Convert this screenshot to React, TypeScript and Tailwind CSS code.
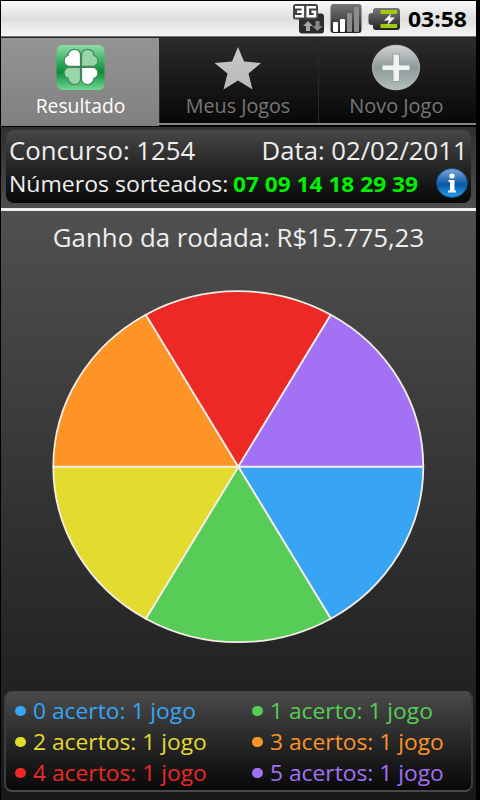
import React from 'react';
import clsx from 'clsx';

const SLICES = [
  { label: '0 acerto: 1 jogo', color: '#38a5f4' },
  { label: '1 acerto: 1 jogo', color: '#57cd57' },
  { label: '2 acertos: 1 jogo', color: '#e3db2e' },
  { label: '3 acertos: 1 jogo', color: '#fe9326' },
  { label: '4 acertos: 1 jogo', color: '#ed2926' },
  { label: '5 acertos: 1 jogo', color: '#a271f4' },
];

const SignalIcons = () => (
  <svg width="110" height="35" viewBox="292 1 110 35" className="shrink-0">
    <defs>
      <linearGradient id="dark" x1="0" y1="0" x2="0" y2="1">
        <stop offset="0" stopColor="#777" />
        <stop offset="1" stopColor="#222" />
      </linearGradient>
    </defs>
    {/* 3G */}
    <rect x="299" y="13.5" width="25" height="20" rx="3" fill="#2b2b2b" />
    <rect x="293" y="4" width="25" height="15.5" rx="2.5" fill="#444" />
    <path
      d="M295 7.300h7.800v8.900H295M297 11.700h6M316 7.300h-8.300v8.900h7.300v-4.500h-3.500"
      fill="none"
      stroke="#fff"
      strokeWidth="2.600"
    />
    <path d="M308 21l5 5h-3v5h-4v-5h-3z" fill="#aaa" />
    <path d="M317.500 31l5-5h-3v-5h-4v5h-3z" fill="#888" />
    {/* signal */}
    <rect x="330.500" y="4" width="31" height="29" rx="3" fill="url(#dark)" />
    <rect x="333" y="22" width="5" height="10" rx="1" fill="#fff" />
    <rect x="340" y="19" width="5" height="13" rx="1" fill="#fff" />
    <rect x="347" y="13" width="5" height="19" rx="1" fill="#8c8c8c" />
    <rect x="354" y="7" width="5" height="25" rx="1" fill="#8c8c8c" />
    {/* battery */}
    <path
      d="M376 8h21q3 0 3 3v16q0 3-3 3h-21q-3 0-3-3v-2h-1q-3.500 0-3.500-3v-6q0-3 3.500-3h1V11q0-3 3-3z"
      fill="url(#dark)"
    />
    <path d="M380.500 10h16.500v4h-16.500zM380.500 24h16.500v4h-16.500z" fill="#9ccb10" />
    <path d="M391 13.500l-7 7h5l-2 5 8-8h-5z" fill="#fff" />
  </svg>
);

const CloverIcon = () => (
  <svg width="50" height="48" viewBox="-1 0 50 48">
    <defs>
      <linearGradient id="clover" x1="0" y1="0" x2="0" y2="1">
        <stop offset="0" stopColor="#8fdcaa" />
        <stop offset="0.400" stopColor="#2fac5a" />
        <stop offset="0.600" stopColor="#0b8c3a" />
        <stop offset="1" stopColor="#72d894" />
      </linearGradient>
    </defs>
    <rect x="0.500" y="1" width="48" height="45" rx="6" fill="url(#clover)" />
    <g stroke="#40865a" strokeWidth="1.200">
      <path d="M24.500 22.300H12.500a5.600 5.600 0 0 1-.500-10.800 6.300 6.300 0 0 1 6.500-6.200q6 0 6 6.500z" fill="#fff" />
      <path d="M25.500 22.300h12a5.600 5.600 0 0 0 .500-10.800 6.300 6.300 0 0 0-6.500-6.200q-6 0-6 6.500z" fill="#98d6aa" />
      <path d="M24.500 23.500H12.500a5.600 5.600 0 0 0-.500 10.800 6.300 6.300 0 0 0 6.500 6.200q6 0 6-6.500z" fill="#98d6aa" />
      <path d="M25.500 23.500h12a5.600 5.600 0 0 1 .500 10.800 6.300 6.300 0 0 1-6.500 6.200q-6 0-6-6.500z" fill="#fff" />
    </g>
  </svg>
);

const StarIcon = () => (
  <svg width="50" height="48" viewBox="0 0 50 48">
    <defs>
      <linearGradient id="star" x1="0" y1="0" x2="0" y2="1">
        <stop offset="0" stopColor="#c8c8c8" />
        <stop offset="1" stopColor="#b8b8b8" />
      </linearGradient>
    </defs>
    <path
      d="M25 3l6 14.500 17 1.500-12.500 10.500L39.500 45.500l-14.500-9-14.500 9L14.500 29.500 1.500 19l17.500-1.500z"
      fill="url(#star)"
    />
  </svg>
);

const PlusIcon = () => (
  <svg width="50" height="48" viewBox="0 0 50 48">
    <defs>
      <linearGradient id="plus" x1="0" y1="0" x2="0" y2="1">
        <stop offset="0" stopColor="#d0d5d5" />
        <stop offset="0.500" stopColor="#8e9999" />
        <stop offset="1" stopColor="#b2bebc" />
      </linearGradient>
    </defs>
    <ellipse cx="25" cy="23.500" rx="23.500" ry="22.300" fill="url(#plus)" stroke="#bcc2c2" />
    <path d="M22 10h6.500v11H39v5.500H28.500v11H22v-11H11V21h11z" fill="#f2f3f3" stroke="#94a09e" />
  </svg>
);

const InfoIcon = () => (
  <svg width="32" height="30" viewBox="0 0 32 30" className="shrink-0">
    <defs>
      <linearGradient id="info" x1="0" y1="0" x2="0" y2="1">
        <stop offset="0" stopColor="#78a9dc" />
        <stop offset="0.450" stopColor="#2366ac" />
        <stop offset="0.550" stopColor="#0859a8" />
        <stop offset="1" stopColor="#28a2e8" />
      </linearGradient>
    </defs>
    <ellipse cx="16" cy="15" rx="15.500" ry="14.500" fill="url(#info)" stroke="#174c83" />
    <ellipse cx="16" cy="8" rx="2.700" ry="2.500" fill="#fff" />
    <path d="M12.500 12h6v10.500h1.500v2h-8v-2h2V14h-1.500z" fill="#fff" />
  </svg>
);

type TabProps = { label: string; icon: React.ReactNode; active?: boolean; textClass: string };

const Tab = ({ label, icon, active, textClass }: TabProps) => (
  <div
    className={clsx(
      'flex flex-col items-center pt-1.5',
      active
        ? 'h-[88px] w-[158px] shrink-0 bg-linear-to-b from-[#949494] to-[#808080] text-white'
        : 'h-[85px] flex-1 border-l border-[#292929] bg-linear-to-b from-[#2c2c2c] to-[#080808] pr-0.5 text-[#777]',
    )}
  >
    {icon}
    <span className={clsx('mt-0.5 text-[20px] leading-[24px] whitespace-nowrap', textClass)}>{label}</span>
  </div>
);

const PieChart = () => {
  const cx = 237.3;
  const cy = 204.7;
  const rx = 185;
  const ry = 175.5;
  const point = (i: number) => {
    const a = (i * Math.PI) / 3;
    return `${cx + rx * Math.cos(a)} ${cy + ry * Math.sin(a)}`;
  };

  return (
    <svg width="475" height="400" viewBox="0 0 475 400" className="shrink-0">
      {SLICES.map((v, i) => (
        <path
          key={v.label}
          d={`M${cx} ${cy}L${point(i)}A${rx} ${ry} 0 0 1 ${point(i + 1)}Z`}
          fill={v.color}
          stroke="#f5eee8"
          strokeWidth="1.800"
          strokeLinejoin="round"
        />
      ))}
    </svg>
  );
};

const App = () => {
  return (
    <div className="h-[800px] w-[480px] overflow-hidden bg-black pt-px pr-1 pl-px font-['Open_Sans','Noto_Sans',sans-serif]">
      <header className="flex h-9 items-center justify-end border-b border-[#777] bg-linear-to-b from-[#fafafa] via-[#dedede] to-[#f5f5f5] pr-2">
        <SignalIcons />
        <span className="ml-1.5 w-[60px] origin-left scale-x-[1.04] pb-px text-[22px] leading-none font-bold text-black">
          03:58
        </span>
      </header>

      <nav className="flex h-[88px] items-start border-t border-[#222] bg-[#868686]">
        <Tab label="Resultado" icon={<CloverIcon />} active textClass="scale-x-[0.965]" />
        <Tab label="Meus Jogos" icon={<StarIcon />} textClass="scale-x-[0.985]" />
        <Tab label="Novo Jogo" icon={<PlusIcon />} textClass="scale-x-[0.995]" />
      </nav>

      <section className="h-[83px] border-t-2 border-black bg-linear-to-b from-[#303030] to-[#4d4d4d] px-[5px] pt-[3px]">
        <div className="h-[73px] rounded-lg bg-linear-to-b from-[#484848] to-[#080808] px-[3px] text-[#eee]">
          <div className="flex h-[38px] items-center justify-between pt-[3px] text-[25px] whitespace-nowrap">
            <span className="origin-left scale-x-[1.03]">Concurso: 1254</span>
            <span className="origin-right scale-x-[1.027]">Data: 02/02/2011</span>
          </div>
          <div className="flex h-[30px] items-center text-[22px] whitespace-nowrap">
            <span className="w-[224px] origin-left scale-x-[1.048]">Números sorteados:</span>
            <b className="origin-left scale-x-[1.03] text-[#00f000]">07 09 14 18 29 39</b>
            <span className="ml-auto">
              <InfoIcon />
            </span>
          </div>
        </div>
      </section>

      <main className="flex h-[592px] flex-col border-t-[3px] border-[#eee] bg-linear-to-b from-[#505050] to-[#181818]">
        <h1 className="h-[51px] scale-x-[1.033] text-center text-[25px] leading-[52px] whitespace-nowrap text-[#eee]">
          Ganho da rodada: R$15.775,23
        </h1>
        <PieChart />
        <ul className="mx-[3px] mt-[29px] grid h-[101px] grid-cols-[237px_1fr] content-start rounded-lg border-2 border-t-[#484848] border-r-[#3c3c3c] border-b-[#484848] border-l-[#3c3c3c] bg-linear-to-b from-[#4a4a4a] to-[#090909] pt-0.5 pl-[9px]">
          {SLICES.map((v) => (
            <li
              key={v.label}
              className="flex h-[31px] items-center text-[22px] whitespace-nowrap"
              style={{ color: v.color }}
            >
              <i className="mr-[7px] h-2.5 w-[11px] rounded-full bg-current" />
              <span className="origin-left scale-x-[1.036]">{v.label}</span>
            </li>
          ))}
        </ul>
      </main>
    </div>
  );
};

export default App;
